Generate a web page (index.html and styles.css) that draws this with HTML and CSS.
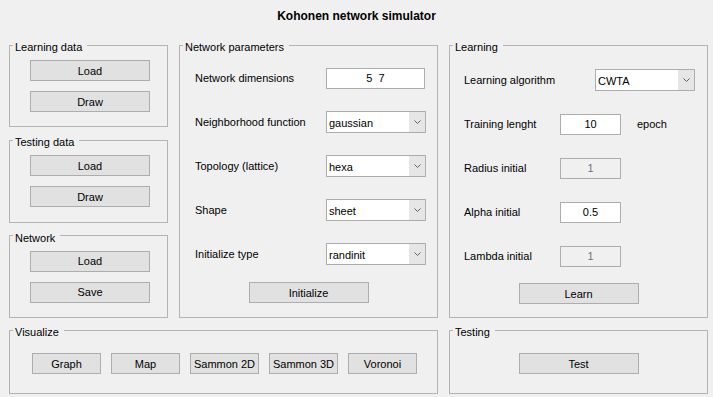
FILE: index.html
```html
<!DOCTYPE html>
<html lang="en">
<head>
  <meta charset="UTF-8" />
  <title>Kohonen network simulator</title>
  <link rel="stylesheet" href="styles.css">
</head>
<body>
  <div class="app">
    <h1 class="title">Kohonen network simulator</h1>

    <div class="main">
      <div class="side">
        <fieldset class="panel side-panel">
          <legend>Learning data</legend>
          <div class="stack">
            <button class="btn">Load</button>
            <button class="btn">Draw</button>
          </div>
        </fieldset>
        <fieldset class="panel side-panel">
          <legend>Testing data</legend>
          <div class="stack">
            <button class="btn">Load</button>
            <button class="btn">Draw</button>
          </div>
        </fieldset>
        <fieldset class="panel side-panel">
          <legend>Network</legend>
          <div class="stack">
            <button class="btn">Load</button>
            <button class="btn">Save</button>
          </div>
        </fieldset>
      </div>

      <fieldset class="panel params">
        <legend>Network parameters</legend>
        <div class="form">
          <div class="row"><label>Network dimensions</label><input class="edit" type="text" value="5  7"></div>
          <div class="row"><label>Neighborhood function</label><div class="popup"><span>gaussian</span><span class="arrow"><svg width="7" height="4" viewBox="0 0 7 4"><path d="M0.5 0.5 L3.5 3.5 L6.5 0.5" /></svg></span></div></div>
          <div class="row"><label>Topology (lattice)</label><div class="popup"><span>hexa</span><span class="arrow"><svg width="7" height="4" viewBox="0 0 7 4"><path d="M0.5 0.5 L3.5 3.5 L6.5 0.5" /></svg></span></div></div>
          <div class="row"><label>Shape</label><div class="popup"><span>sheet</span><span class="arrow"><svg width="7" height="4" viewBox="0 0 7 4"><path d="M0.5 0.5 L3.5 3.5 L6.5 0.5" /></svg></span></div></div>
          <div class="row"><label>Initialize type</label><div class="popup"><span>randinit</span><span class="arrow"><svg width="7" height="4" viewBox="0 0 7 4"><path d="M0.5 0.5 L3.5 3.5 L6.5 0.5" /></svg></span></div></div>
        </div>
        <div class="actions"><button class="btn">Initialize</button></div>
      </fieldset>

      <fieldset class="panel learning">
        <legend>Learning</legend>
        <div class="form">
          <div class="row"><label>Learning algorithm</label><div class="popup"><span>CWTA</span><span class="arrow"><svg width="7" height="4" viewBox="0 0 7 4"><path d="M0.5 0.5 L3.5 3.5 L6.5 0.5" /></svg></span></div></div>
          <div class="row"><label>Training lenght</label><input class="edit short" type="text" value="10"><span class="unit">epoch</span></div>
          <div class="row"><label>Radius initial</label><input class="edit short" type="text" value="1" disabled></div>
          <div class="row"><label>Alpha initial</label><input class="edit short" type="text" value="0.5"></div>
          <div class="row"><label>Lambda initial</label><input class="edit short" type="text" value="1" disabled></div>
        </div>
        <div class="actions"><button class="btn">Learn</button></div>
      </fieldset>
    </div>

    <div class="bottom">
      <fieldset class="panel visualize">
        <legend>Visualize</legend>
        <div class="vis-buttons">
          <button class="btn small">Graph</button>
          <button class="btn small">Map</button>
          <button class="btn small">Sammon 2D</button>
          <button class="btn small">Sammon 3D</button>
          <button class="btn small">Voronoi</button>
        </div>
      </fieldset>
      <fieldset class="panel testing">
        <legend>Testing</legend>
        <div class="actions"><button class="btn">Test</button></div>
      </fieldset>
    </div>
  </div>
</body>
</html>
```

FILE: styles.css
```css
* {
  box-sizing: border-box;
}

body {
  margin: 0;
  background: #f0f0f0;
  color: #000;
  font-family: "Liberation Sans", Arial, sans-serif;
  font-size: 11px;
}

.app {
  width: 713px;
  height: 397px;
}

.title {
  margin: 0;
  padding-top: 8px;
  height: 37px;
  font-size: 12px;
  line-height: 16px;
  font-weight: bold;
  text-align: center;
}

.main {
  display: flex;
  gap: 11px;
  height: 281px;
  margin-left: 9px;
}

.bottom {
  display: flex;
  gap: 11px;
  height: 72px;
  margin: 4px 0 0 9px;
}

/* group boxes */
.panel {
  margin: 0;
  padding: 0;
  min-width: 0;
  border: 1px solid #b4b4b4;
}

.panel legend {
  margin-left: 3px;
  padding: 4px 5px 0 2px;
  line-height: 12px;
}

.side {
  width: 159px;
  display: flex;
  flex-direction: column;
  gap: 5px;
}

.side-panel {
  flex: 1;
}

.stack {
  display: flex;
  flex-direction: column;
  align-items: flex-start;
  gap: 10px;
  padding: 7px 0 0 20px;
}

.params,
.learning,
.testing {
  width: 259px;
}

.visualize {
  width: 429px;
}

/* controls */
.btn {
  width: 120px;
  height: 21px;
  padding: 0;
  background: #e1e1e1;
  border: 1px solid #adadad;
  color: #000;
  font: inherit;
}

.btn.small {
  width: 69px;
}

.form {
  display: flex;
  flex-direction: column;
  gap: 22px;
}

.params .form {
  padding: 14px 0 0 15px;
}

.learning .form {
  padding: 16px 12px 0 14px;
}

.row {
  display: flex;
  align-items: center;
  height: 22px;
}

.params .row label {
  width: 131px;
}

.learning .row label {
  width: 96px;
}

.learning .popup {
  margin-left: auto;
}

.edit {
  width: 99px;
  height: 21px;
  padding: 0;
  background: #fff;
  border: 1px solid #adadad;
  color: #000;
  font: inherit;
  text-align: center;
  white-space: pre;
}

.edit.short {
  width: 61px;
}

.edit:disabled {
  background: #f0f0f0;
  color: #7a6d80;
}

.unit {
  margin-left: 16px;
}

.popup {
  width: 100px;
  height: 22px;
  display: flex;
  align-items: center;
  background: #fff;
  border: 1px solid #adadad;
}

.popup span:first-child {
  padding: 2px 0 0 2px;
}

.arrow {
  margin-left: auto;
  width: 16px;
  height: 100%;
  display: flex;
  align-items: center;
  justify-content: center;
  background: #e6e6e6;
}

.arrow path {
  fill: none;
  stroke: #606060;
  stroke-width: 1;
}

.actions {
  display: flex;
  justify-content: center;
}

.params .actions {
  margin-top: 17px;
}

.learning .actions {
  margin-top: 16px;
}

.testing .actions {
  padding-top: 15px;
}

.vis-buttons {
  display: flex;
  gap: 10px;
  padding: 15px 0 0 22px;
}
```
